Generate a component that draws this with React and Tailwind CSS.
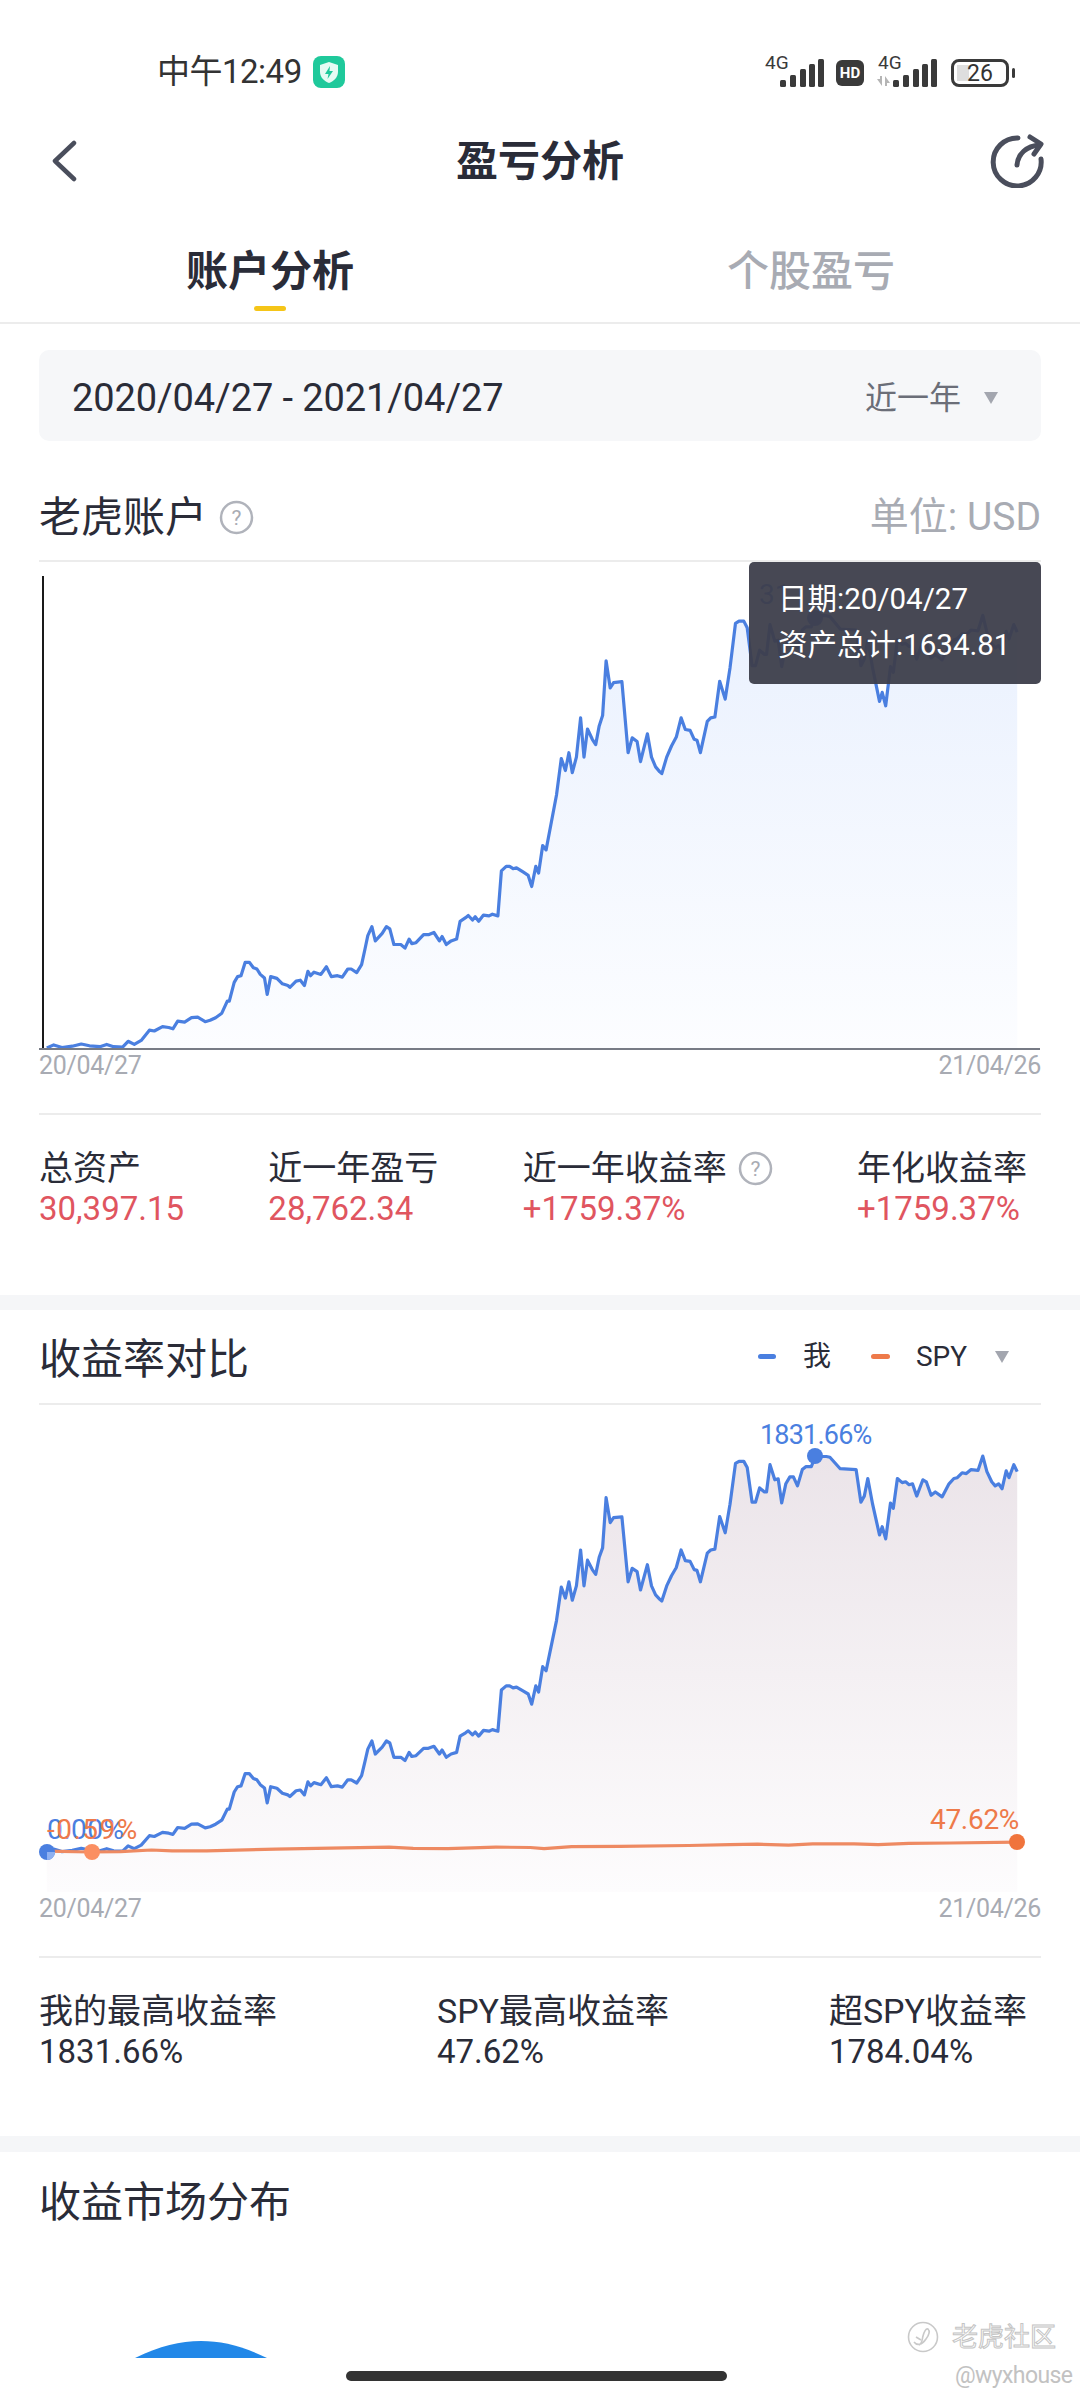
const raw = `68,1352 78,1345 90,1351 105,1348 118,1343 130,1347 145,1349 155,1344 165,1349 178,1350 186,1337 195,1344 205,1335 217,1312 224,1314 236,1304 245,1306 251,1309 258,1292 268,1294 278,1284 287,1283 298,1293 305,1290 313,1284 322,1274 330,1247 333,1247 340,1205 345,1192 350,1190 356,1160 362,1160 368,1172 373,1175 378,1187 384,1195 388,1232 393,1192 402,1196 410,1208 418,1212 421,1216 430,1202 436,1200 442,1212 447,1180 451,1190 456,1182 466,1187 474,1170 481,1192 490,1190 497,1193 505,1175 510,1175 518,1183 525,1165 530,1130 534,1100 540,1080 545,1112 555,1095 561,1080 566,1085 572,1120 582,1120 588,1128 594,1108 598,1118 604,1116 615,1098 622,1098 630,1093 638,1112 642,1102 648,1120 655,1112 663,1108 668,1068 676,1060 680,1055 686,1065 690,1058 695,1068 702,1054 710,1056 715,1052 723,1056 728,955 735,945 740,945 745,950 750,948 760,958 767,965 772,990 778,945 782,960 788,898 793,908 800,850 808,785 815,703 821,730 826,690 831,735 837,700 843,612 848,700 853,637 860,660 865,672 870,630 875,607 880,484 886,545 891,533 903,531 912,690 918,657 925,665 930,710 940,648 946,700 952,722 958,733 961,737 968,700 975,675 982,655 989,612 995,638 1002,640 1008,660 1012,662 1017,690 1027,620 1032,612 1038,610 1045,530 1053,570 1060,500 1068,400 1073,395 1080,395 1085,410 1092,495 1097,495 1103,460 1110,470 1113,470 1118,403 1125,440 1130,438 1135,497 1141,450 1147,433 1152,433 1158,455 1165,415 1170,408 1178,408 1184,383 1200,383 1205,385 1220,413 1243,415 1250,495 1255,480 1260,437 1267,500 1277,575 1281,555 1286,585 1293,497 1297,510 1303,437 1310,447 1315,445 1320,452 1325,450 1331,480 1340,440 1345,445 1352,478 1358,470 1368,482 1378,450 1385,437 1390,435 1397,423 1403,425 1410,415 1420,417 1427,382 1433,420 1440,445 1445,455 1450,450 1455,462 1461,418 1465,435 1472,403 1477,420`;
const rawSpy = `68,1350 130,1352 175,1351 220,1347 250,1349 300,1349 400,1345 500,1342 565,1340 600,1343 650,1344 720,1340 770,1341 790,1344 830,1339 900,1338 1000,1336 1060,1334 1100,1333 1145,1335 1180,1332 1240,1332 1275,1334 1320,1331 1380,1330 1477,1328`;

// points were traced off the second chart, both charts share them at different y scales
const parse = (s) => s.split(' ').map((p) => p.split(',').map(Number));
const toPath = (pts, base, k) =>
  pts.map(([x, y], i) => `${i ? 'L' : 'M'}${(x / 1.452 - 39).toFixed(1)} ${(base + ((y - 1352) / 2.45) * k).toFixed(1)}`).join(' ');

const line = parse(raw);
const spy = parse(rawSpy);

function Triangle({ className }) {
  return (
    <svg className={className} width="16" height="14" viewBox="0 0 16 14">
      <path d="M1 1 H15 L8 13 Z" fill="#a3a6af" />
    </svg>
  );
}

function Help({ size = 35 }) {
  return (
    <svg width={size} height={size} viewBox="0 0 35 35">
      <circle cx="17.5" cy="17.5" r="15.5" fill="none" stroke="#b0b3bb" strokeWidth="2.5" />
      <text x="17.5" y="25" textAnchor="middle" fontSize="21" fill="#a8abb3" fontFamily="Roboto">?</text>
    </svg>
  );
}

function Bars() {
  return (
    <svg width="44" height="28" viewBox="0 0 44 28" fill="#3a3a3a">
      <rect x="0" y="21" width="6" height="7" rx="1.5" />
      <rect x="10" y="16" width="6" height="12" rx="1.5" />
      <rect x="20" y="10" width="6" height="18" rx="1.5" />
      <rect x="29" y="5" width="6" height="23" rx="1.5" />
      <rect x="38" y="0" width="6" height="28" rx="1.5" />
    </svg>
  );
}

function StatusBar() {
  return (
    <div className="h-[122px] pt-[50px]">
      <div className="flex items-center h-[44px] relative">
        <span className="ml-[157px] text-[33px] leading-[44px] tracking-[-0.5px] text-[#333333]">中午12:49</span>
        <svg className="ml-[11px]" width="32" height="32" viewBox="0 0 32 32">
          <rect width="32" height="32" rx="8" fill="#1fc99b" />
          <path d="M16 6 L25 9 V16 C25 21 21 25 16 27 C11 25 7 21 7 16 V9 Z" fill="#e6fbf4" />
          <path d="M17 10 L12 18 H15.5 L14.5 23 L20 15 H16.5 Z" fill="#1fc99b" />
        </svg>
        <div className="ml-auto flex items-end h-[32px] mr-[71px]">
          <div className="relative w-[59px] h-[32px]">
            <span className="absolute left-0 top-[-3px] text-[19px] leading-[20px] text-[#3a3a3a]">4G</span>
            <div className="absolute right-0 bottom-[1px] flex"><Bars /></div>
          </div>
          <div className="ml-[12px] mb-[2px] w-[28px] h-[26px] rounded-[6px] bg-[#3a3a3a] flex items-center justify-center text-[15px] font-bold text-white leading-none">HD</div>
          <div className="relative ml-[12px] w-[61px] h-[32px]">
            <span className="absolute left-[2px] top-[-3px] text-[19px] leading-[20px] text-[#3a3a3a]">4G</span>
            <svg className="absolute left-0 bottom-[2px]" width="15" height="10" viewBox="0 0 15 10" fill="#b5b5b5">
              <path d="M1 3 H4 V0 H6 V10 Z M9 0 L14 7 H11 V10 H9 Z" />
            </svg>
            <div className="absolute right-0 bottom-[1px] flex"><Bars /></div>
          </div>
          <div className="relative ml-[14px] mb-[1px] w-[58px] h-[28px] rounded-[8px] border-[3px] border-[#3a3a3a] flex items-center justify-center">
            <div className="absolute left-[3px] top-[3px] bottom-[3px] w-[12px] bg-[#dedede]" />
            <span className="relative text-[23px] leading-none text-[#333333]">26</span>
            <div className="absolute right-[-9px] top-[6px] w-[3px] h-[10px] rounded-sm bg-[#3a3a3a]" />
          </div>
        </div>
      </div>
    </div>
  );
}

function Header() {
  return (
    <div className="relative h-[78px] flex items-center justify-center pt-[2px]">
      <svg className="absolute left-[50px] top-[18px]" width="28" height="42" viewBox="0 0 28 42" fill="none" stroke="#4a4e5c" strokeWidth="4.5" strokeLinecap="round" strokeLinejoin="round">
        <path d="M24 3 L5 21 L24 39" />
      </svg>
      <span className="text-[42px] leading-none font-bold text-[#2a2c38]">盈亏分析</span>
      <svg className="absolute left-[990px] top-[10px]" width="56" height="56" viewBox="0 0 56 56" fill="none" stroke="#4a4e5c" strokeWidth="5" strokeLinecap="round" strokeLinejoin="round">
        <path d="M28 6 A24 24 0 1 0 51 27" />
        <path d="M27 33 C28 22 36 14 50 13" />
        <path d="M40 5 L51 12 L44 22" />
      </svg>
    </div>
  );
}

function Tabs() {
  return (
    <div className="h-[124px] border-b-2 border-[#ececec] flex">
      <div className="w-[540px] flex flex-col items-center pt-[47px]">
        <span className="text-[42px] leading-[50px] font-bold text-[#2a2c38]">账户分析</span>
        <div className="mt-[9px] w-[32px] h-[5px] rounded-full bg-[#f5c518]" />
      </div>
      <div className="w-[540px] pl-[187px] pt-[47px]">
        <span className="text-[42px] leading-[50px] font-medium text-[#a8abb3]">个股盈亏</span>
      </div>
    </div>
  );
}

function DateAxis() {
  return (
    <div className="flex justify-between pt-[1px] text-[25px] leading-[30px] tracking-[-0.3px] text-[#a8abb3]">
      <span>20/04/27</span>
      <span>21/04/26</span>
    </div>
  );
}

function StatRow({ items, valueClass }) {
  return (
    <div className="flex justify-between pr-[14px]">
      {items.map((it) => (
        <div key={it.label} className="flex flex-col">
          <div className="flex items-center h-[40px]">
            <span className="text-[34px] leading-[40px] text-[#2a2c38]">{it.label}</span>
            {it.help && <span className="ml-[11px] flex"><Help /></span>}
          </div>
          <span className={`text-[33px] leading-[40px] mt-[1px] ${valueClass}`}>{it.value}</span>
        </div>
      ))}
    </div>
  );
}

function AccountChart() {
  const base = 486;
  const k = 1.093;
  const d = toPath(line, base, k);
  const area = `${d} L${1477 / 1.452 - 39} ${base} L${68 / 1.452 - 39} ${base} Z`;
  return (
    <div className="relative h-[488px]">
      <svg className="block" width="1001" height="488" viewBox="0 0 1001 488">
        <defs>
          <linearGradient id="fillA" x1="0" y1="0" x2="0" y2="1">
            <stop offset="0" stopColor="#eaf1fe" />
            <stop offset="1" stopColor="#fcfdff" />
          </linearGradient>
        </defs>
        <path d={area} fill="url(#fillA)" />
        <path d={d} fill="none" stroke="#4a7fe0" strokeWidth="3.2" strokeLinejoin="round" />
        <line x1="4" y1="14" x2="4" y2="487" stroke="#1a1a1a" strokeWidth="2" />
        <line x1="0" y1="487" x2="1001" y2="487" stroke="#777b85" strokeWidth="2" />
        <circle cx="776" cy="56" r="8" fill="#4a7fe0" />
      </svg>
      <span className="absolute left-[720px] top-[18px] text-[28px] leading-[30px] text-[#4a7fe0]">31</span>
      <div className="absolute right-0 top-0 w-[292px] h-[122px] rounded-[5px] bg-[#3d3e4b]/95 pl-[29px] pt-[14px] text-[29.5px] leading-[46px] text-white">
        <div>日期:20/04/27</div>
        <div>资产总计:1634.81</div>
      </div>
    </div>
  );
}

function CompareChart() {
  const base = 447;
  const d = toPath(line, base, 1);
  const s = toPath(spy, base, 1);
  const area = `${d} L${1477 / 1.452 - 39} 487 L${68 / 1.452 - 39} 487 Z`;
  return (
    <div className="relative h-[488px]">
      <svg className="block" width="1001" height="488" viewBox="0 0 1001 488">
        <defs>
          <linearGradient id="fillB" x1="0" y1="0" x2="0" y2="1">
            <stop offset="0" stopColor="#ebe4e9" />
            <stop offset="1" stopColor="#fdfcfd" />
          </linearGradient>
        </defs>
        <path d={area} fill="url(#fillB)" />
        <path d={d} fill="none" stroke="#4a7fe0" strokeWidth="3.2" strokeLinejoin="round" />
        <path d={s} fill="none" stroke="#ee8a62" strokeWidth="3.2" strokeLinejoin="round" />
        <circle cx="776" cy="51" r="8" fill="#4a7fe0" />
        <circle cx="8" cy="447" r="8" fill="#4a7fe0" />
        <path d="M8 447 V455 A8 8 0 0 0 16 447 Z" fill="#8fb0f0" />
        <circle cx="53" cy="447" r="8" fill="#fb8f62" />
        <circle cx="978" cy="437" r="8" fill="#f0743c" />
      </svg>
      <span className="absolute left-[721px] top-[15px] text-[27px] leading-[30px] tracking-[-0.8px] text-[#4a7fe0]">1831.66%</span>
      <span className="absolute left-[8px] top-[410px] text-[28px] leading-[30px] tracking-[0.5px] text-[#4a7fe0]">0.00%</span>
      <span className="absolute left-[8px] top-[410px] text-[28px] leading-[30px] tracking-[1.5px] text-[#ee7a4a]">-0.59%</span>
      <span className="absolute left-[891px] top-[400px] text-[28px] leading-[30px] tracking-[-0.3px] text-[#ee7a4a]">47.62%</span>
    </div>
  );
}

export default function App() {
  return (
    <div className="relative w-[1080px] h-[2400px] overflow-hidden bg-white font-['Roboto','Noto_Sans_CJK_SC',sans-serif]">
      <StatusBar />
      <Header />
      <Tabs />

      <div className="h-[971px] px-[39px] pt-[26px]">
        <div className="h-[91px] rounded-[10px] bg-[#f6f7f9] flex items-center pl-[33px] pr-[42px] pt-[5px]">
          <span className="text-[38px] tracking-[-0.1px] text-[#2a2c38]">2020/04/27 - 2021/04/27</span>
          <span className="ml-auto text-[32px] text-[#6b6e78]">近一年</span>
          <Triangle className="ml-[22px]" />
        </div>
        <div className="mt-[27px] h-[92px] border-b-2 border-[#ececec] box-content flex items-center pt-[0px]">
          <span className="relative top-[3px] text-[42px] text-[#2a2c38]">老虎账户</span>
          <span className="relative top-[3px] ml-[12px] flex"><Help /></span>
          <span className="relative top-[3px] ml-auto text-[39px] text-[#a8abb3]">单位: USD</span>
        </div>
        <AccountChart />
        <DateAxis />
        <div className="mt-[32px] border-t-2 border-[#ececec] pt-[33px]">
          <StatRow
            valueClass="text-[#e0555f]"
            items={[
              { label: '总资产', value: '30,397.15' },
              { label: '近一年盈亏', value: '28,762.34' },
              { label: '近一年收益率', value: '+1759.37%', help: true },
              { label: '年化收益率', value: '+1759.37%' },
            ]}
          />
        </div>
      </div>

      <div className="h-[15px] bg-[#f5f6f8]" />

      <div className="h-[826px] px-[39px]">
        <div className="h-[93px] border-b-2 border-[#ececec] box-content flex items-center">
          <span className="relative top-[3px] text-[42px] text-[#2a2c38]">收益率对比</span>
          <div className="ml-auto flex items-center mr-[31px]">
            <div className="w-[18px] h-[5px] rounded-full bg-[#4a7fe0]" />
            <span className="ml-[27px] text-[28px] text-[#2a2c38]">我</span>
            <div className="ml-[40px] w-[19px] h-[5px] rounded-full bg-[#ee7a4a]" />
            <span className="ml-[26px] text-[28px] text-[#2a2c38]">SPY</span>
            <Triangle className="ml-[27px]" />
          </div>
        </div>
        <CompareChart />
        <DateAxis />
        <div className="mt-[32px] border-t-2 border-[#ececec] pt-[33px]">
          <StatRow
            valueClass="text-[#2a2c38]"
            items={[
              { label: '我的最高收益率', value: '1831.66%' },
              { label: 'SPY最高收益率', value: '47.62%' },
              { label: '超SPY收益率', value: '1784.04%' },
            ]}
          />
        </div>
      </div>

      <div className="h-[16px] bg-[#f5f6f8]" />

      <div className="h-[76px] px-[39px] pt-[25px]">
        <span className="text-[42px] leading-[52px] text-[#2a2c38]">收益市场分布</span>
      </div>
      <svg className="block ml-[135px] mt-[113px]" width="132" height="17" viewBox="0 0 132 17">
        <path d="M0 17 C25 5 45 0 66 0 C87 0 107 5 132 17 Z" fill="#2288e8" />
      </svg>

      {/* home indicator */}
      <div className="absolute left-[346px] top-[2371px] w-[381px] h-[10px] rounded-full bg-[#333333]" />

      {/* watermark */}
      <div className="absolute left-[907px] top-[2321px] w-[173px] flex items-center">
        <svg className="shrink-0" width="32" height="32" viewBox="0 0 32 32" fill="none" stroke="#c9c9c9" strokeWidth="1.6">
          <circle cx="16" cy="16" r="14.5" />
          <path d="M7 21 C10 25 15 24 19 18 C22 14 23 10 21 8 C19 7 17 11 16 15 C15 19 15 23 12 24" />
          <path d="M9 16 L14 19" />
        </svg>
        <span className="ml-[13px] whitespace-nowrap text-[26px] leading-none text-white [-webkit-text-stroke:1px_#c4c4c4]">老虎社区</span>
      </div>
      <span className="absolute left-[955px] top-[2363px] text-[23px] leading-[26px] tracking-[-0.6px] text-[#c2c2c2]">@wyxhouse</span>
    </div>
  );
}
